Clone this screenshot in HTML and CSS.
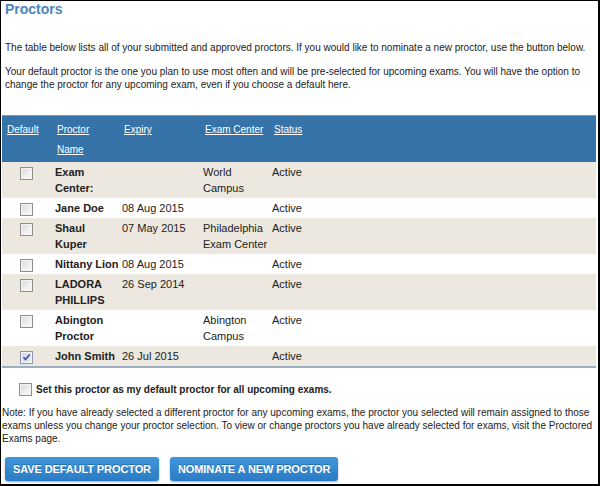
FILE: index.html
```html
<!DOCTYPE html>
<html>
<head>
<meta charset="utf-8">
<link rel="stylesheet" href="styles.css">
</head>
<body>
<div class="page">
  <h1 class="title">Proctors</h1>
  <p class="intro intro-first">The table below lists all of your submitted and approved proctors. If you would like to nominate a new proctor, use the button below.</p>
  <p class="intro intro-last">Your default proctor is the one you plan to use most often and will be pre-selected for upcoming exams. You will have the option to change the proctor for any upcoming exam, even if you choose a default here.</p>
  <table class="proctors">
    <colgroup>
      <col class="c-sel"><col class="c-name"><col class="c-exp"><col class="c-center"><col>
    </colgroup>
    <thead>
      <tr>
        <th><a href="#">Default</a></th>
        <th><a href="#">Proctor<br>Name</a></th>
        <th><a href="#">Expiry</a></th>
        <th><a href="#">Exam Center</a></th>
        <th><a href="#">Status</a></th>
      </tr>
    </thead>
    <tbody>
      <tr class="alt"><td class="sel"><span class="cb"></span></td><td class="name">Exam<br>Center:</td><td></td><td>World<br>Campus</td><td>Active</td></tr>
      <tr><td class="sel"><span class="cb"></span></td><td class="name">Jane Doe</td><td>08 Aug 2015</td><td></td><td>Active</td></tr>
      <tr class="alt"><td class="sel"><span class="cb"></span></td><td class="name">Shaul<br>Kuper</td><td>07 May 2015</td><td>Philadelphia<br>Exam Center</td><td>Active</td></tr>
      <tr><td class="sel"><span class="cb"></span></td><td class="name">Nittany Lion</td><td>08 Aug 2015</td><td></td><td>Active</td></tr>
      <tr class="alt"><td class="sel"><span class="cb"></span></td><td class="name">LADORA<br>PHILLIPS</td><td>26 Sep 2014</td><td></td><td>Active</td></tr>
      <tr><td class="sel"><span class="cb"></span></td><td class="name">Abington<br>Proctor</td><td></td><td>Abington<br>Campus</td><td>Active</td></tr>
      <tr class="alt"><td class="sel"><span class="cb checked"><svg width="11" height="11" viewBox="0 0 11 11"><path d="M2.5 5.2 L4.6 7.6 L8.6 2.6" fill="none" stroke="#3d4f96" stroke-width="1.6"/></svg></span></td><td class="name">John Smith</td><td>26 Jul 2015</td><td></td><td>Active</td></tr>
    </tbody>
  </table>
  <div class="default-row"><span class="cb"></span><span>Set this proctor as my default proctor for all upcoming exams.</span></div>
  <p class="note">Note: If you have already selected a different proctor for any upcoming exams, the proctor you selected will remain assigned to those exams unless you change your proctor selection. To view or change proctors you have already selected for exams, visit the Proctored Exams page.</p>
  <div class="actions">
    <button class="btn">SAVE DEFAULT PROCTOR</button>
    <button class="btn">NOMINATE A NEW PROCTOR</button>
  </div>
</div>
</body>
</html>
```
FILE: styles.css
```css
body {
  margin: 0;
  background: #fff;
}
.page {
  width: 600px;
  height: 486px;
  box-sizing: border-box;
  border: 1px solid #000;
  border-right-width: 2px;
  border-bottom-width: 2px;
  overflow: hidden;
  font-family: "Liberation Sans", Arial, sans-serif;
  font-size: 10px;
  color: #222;
  background: #fff;
}
.title {
  margin: 0;
  padding-left: 4px;
  font-size: 14px;
  line-height: 16px;
  font-weight: bold;
  color: #4a86ba;
}
.intro {
  margin: 0;
  padding-left: 4px;
  line-height: 13px;
}
.intro-first {
  margin-top: 24px;
  margin-bottom: 11px;
}
.intro-last {
  margin-bottom: 24px;
}
.proctors {
  border-collapse: collapse;
  table-layout: fixed;
  width: 594px;
  margin-left: 1px;
}
.c-sel { width: 50px; }
.c-name { width: 67px; }
.c-exp { width: 81px; }
.c-center { width: 69px; }
.proctors th {
  background: #3673a8;
  border-top: 1px solid #7a9cbc;
  text-align: left;
  font-weight: normal;
  font-size: 10px;
  padding: 4px 0 2px 5px;
  line-height: 20px;
  vertical-align: top;
}
.proctors th a {
  color: #fff;
  text-decoration: underline;
}
.proctors td {
  padding: 2px 0 2px 3px;
  font-size: 11px;
  line-height: 16px;
  vertical-align: top;
  white-space: nowrap;
}
.proctors td.sel {
  padding-left: 0;
  padding-right: 2px;
}
.proctors td.name {
  font-weight: bold;
}
.proctors tr.alt td {
  background: #ece8df;
}
.proctors tbody tr:last-child td {
  border-bottom: 2px solid #9db0c2;
}
.cb {
  display: block;
  box-sizing: border-box;
  width: 13px;
  height: 13px;
  border: 1px solid #8f8f8f;
  background: linear-gradient(135deg, #d8d8d8 0%, #f0f0f0 60%, #fdfdfd 100%);
  box-shadow: inset 0 0 0 1px #f4f4f4;
}
.sel .cb {
  margin: 3px auto 0;
}
.cb.checked {
  background: linear-gradient(135deg, #d3d8ee 0%, #e9ecf8 100%);
  border-color: #8f95b0;
}
.cb svg {
  display: block;
}
.default-row {
  display: flex;
  align-items: center;
  gap: 4px;
  margin: 15px 0 0 18px;
  font-weight: bold;
  line-height: 13px;
}
.note {
  margin: 10px 0 0 1px;
  line-height: 13px;
}
.actions {
  display: flex;
  gap: 11px;
  margin: 12px 0 0 4px;
}
.btn {
  height: 24px;
  padding: 0 8px;
  border: 0;
  border-radius: 3px;
  background: linear-gradient(#3f96db, #2b7bc5);
  box-shadow: 0 1px 2px rgba(0, 0, 0, 0.35);
  color: #fff;
  font-family: "Liberation Sans", Arial, sans-serif;
  font-size: 11px;
  font-weight: bold;
  letter-spacing: -0.1px;
  text-shadow: 0 -1px 0 rgba(0, 0, 0, 0.25);
}
```
